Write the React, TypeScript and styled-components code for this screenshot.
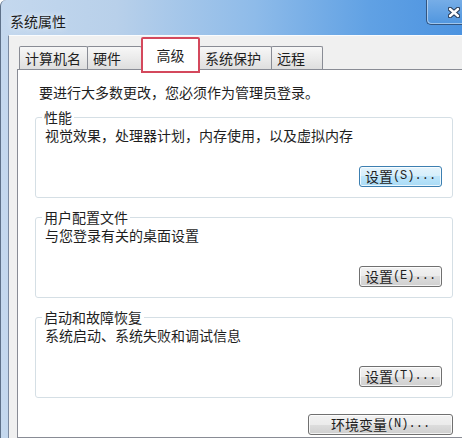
import React from "react";
import styled, { createGlobalStyle } from "styled-components";

const Global = createGlobalStyle`
  html, body { margin: 0; padding: 0; background: #fff; }
  body {
    width: 462px;
    height: 438px;
    overflow: hidden;
    font-family: "Noto Sans CJK SC", sans-serif;
  }
`;

const Frame = styled.div`
  width: 462px;
  height: 438px;
  box-sizing: border-box;
  display: flex;
  flex-direction: column;
  overflow: hidden;
  background: linear-gradient(
    to right,
    #c4d8ee 0%,
    #b8d0ea 25%,
    #8ebbe9 55%,
    #60a1e4 80%,
    #4c93e0 100%
  );
  border-left: 1px solid #5e7189;
  border-top-left-radius: 6px;
`;

const TitleBar = styled.div`
  height: 35px;
  flex-shrink: 0;
  display: flex;
  align-items: flex-start;
  justify-content: space-between;
`;

const Title = styled.div`
  margin: 13px 0 0 9px;
  font-size: 14px;
  line-height: 16px;
  color: #1b1b1b;
  text-shadow: 0 0 6px rgba(255, 255, 255, 0.9);
`;

const CloseButton = styled.div`
  width: 36px;
  height: 25px;
  box-sizing: border-box;
  display: flex;
  align-items: center;
  justify-content: flex-end;
  padding: 0 2px 0 0;
  border-left: 1px solid #33557f;
  border-bottom: 1px solid #33557f;
  border-bottom-left-radius: 5px;
  background: linear-gradient(#76ade7, #5096df);
  box-shadow: inset 1px -1px 0 rgba(255, 255, 255, 0.45);
`;

const Client = styled.div`
  flex: 1;
  display: flex;
  flex-direction: column;
  margin-left: 7px;
  border-left: 1px solid #7b8aa0;
  border-top: 1px solid #fafcfe;
  background: #f0f0f0;
  padding: 1px 0 0 8px;
  overflow: hidden;
`;

const TabStrip = styled.div`
  height: 32px;
  flex-shrink: 0;
  display: flex;
  align-items: flex-end;
  padding-left: 2px;
  position: relative;
  z-index: 1;
`;

const Tab = styled.div<{ $w: number; $active?: boolean }>`
  width: ${(p) => p.$w}px;
  box-sizing: border-box;
  height: ${(p) => (p.$active ? 36 : 23)}px;
  margin-right: -1px;
  margin-bottom: ${(p) => (p.$active ? -4 : 0)}px;
  display: flex;
  align-items: center;
  justify-content: ${(p) => (p.$active ? "center" : "flex-start")};
  padding-left: ${(p) => (p.$active ? 0 : 5)}px;
  border: ${(p) => (p.$active ? "2px solid #d4485c" : "1px solid #898c95")};
  border-bottom: ${(p) => (p.$active ? "2px solid #d4485c" : "none")};
  border-radius: 2px 2px 0 0;
  background: ${(p) =>
    p.$active ? "#fff" : "linear-gradient(#f7f7f7, #ebebeb 50%, #dedede)"};
  font-size: 14px;
  line-height: 16px;
  color: #1e1e1e;
  position: relative;
  z-index: ${(p) => (p.$active ? 2 : 1)};
`;

const Panel = styled.div`
  width: 454px;
  flex: 1;
  box-sizing: border-box;
  display: flex;
  flex-direction: column;
  background: #fff;
  border: 1px solid #898c95;
  padding: 13px 17px 0 17px;
`;

const Notice = styled.div`
  font-size: 14px;
  line-height: 18px;
  padding-left: 4px;
  color: #1e1e1e;
`;

const Group = styled.fieldset<{ $top: number }>`
  margin: ${(p) => p.$top}px 0 0 0;
  padding: 0 10px 10px 9px;
  min-width: 0;
  border: 1px solid #d5dfe5;
  border-radius: 3px;
`;

const Legend = styled.legend`
  font-size: 14px;
  line-height: 14px;
  padding: 0 2px;
  margin-left: -3px;
  color: #1e1e1e;
`;

const Desc = styled.div`
  margin-top: 3px;
  font-size: 14px;
  line-height: 16px;
  color: #1e1e1e;
`;

const ButtonRow = styled.div<{ $top: number }>`
  display: flex;
  justify-content: flex-end;
  margin-top: ${(p) => p.$top}px;
`;

const Button = styled.button<{ $w: number; $primary?: boolean }>`
  width: ${(p) => p.$w}px;
  height: 21px;
  box-sizing: border-box;
  padding: 0;
  display: inline-flex;
  align-items: center;
  justify-content: center;
  border: 1px solid ${(p) => (p.$primary ? "#3c7fb1" : "#707070")};
  border-radius: 3px;
  background: ${(p) =>
    p.$primary
      ? "linear-gradient(#e5f4fc 0%, #d4eefb 50%, #bde5fa 50%, #a9dbf6 100%)"
      : "linear-gradient(#f2f2f2 0%, #ebebeb 50%, #dddddd 50%, #cfcfcf 100%)"};
  box-shadow: inset 0 0 0 1px rgba(255, 255, 255, 0.75);
  font-family: "Noto Sans CJK SC", sans-serif;
  font-size: 14px;
  line-height: 17px;
  color: #1e1e1e;
`;

const Hotkey = styled.span`
  font-family: "Liberation Mono", monospace;
  font-size: 12px;
`;

const CloseX = () => (
  <svg width="12" height="11" viewBox="0 0 12 11">
    <path d="M2 2 L10 9 M10 2 L2 9" stroke="#2a3e5a" strokeWidth="4.6" strokeLinecap="round" />
    <path d="M2 2 L10 9 M10 2 L2 9" stroke="#ffffff" strokeWidth="2.4" strokeLinecap="round" />
  </svg>
);

const tabs = [
  { label: "计算机名", w: 69 },
  { label: "硬件", w: 55 },
  { label: "高级", w: 59, active: true },
  { label: "系统保护", w: 73 },
  { label: "远程", w: 52 },
];

const groups = [
  { title: "性能", desc: "视觉效果，处理器计划，内存使用，以及虚拟内存", key: "(S)...", primary: true, top: 9 },
  { title: "用户配置文件", desc: "与您登录有关的桌面设置", key: "(E)...", top: 12 },
  { title: "启动和故障恢复", desc: "系统启动、系统失败和调试信息", key: "(T)...", top: 12 },
];

export default function App() {
  return (
    <>
      <Global />
      <Frame>
        <TitleBar>
          <Title>系统属性</Title>
          <CloseButton>
            <CloseX />
          </CloseButton>
        </TitleBar>
        <Client>
          <TabStrip>
            {tabs.map((t) => (
              <Tab key={t.label} $w={t.w} $active={t.active}>
                {t.label}
              </Tab>
            ))}
          </TabStrip>
          <Panel>
            <Notice>要进行大多数更改，您必须作为管理员登录。</Notice>
            {groups.map((g) => (
              <Group key={g.title} $top={g.top}>
                <Legend>{g.title}</Legend>
                <Desc>{g.desc}</Desc>
                <ButtonRow $top={23}>
                  <Button $w={83} $primary={g.primary}>
                    设置<Hotkey>{g.key}</Hotkey>
                  </Button>
                </ButtonRow>
              </Group>
            ))}
            <ButtonRow $top={16}>
              <Button $w={145}>
                环境变量<Hotkey>(N)...</Hotkey>
              </Button>
            </ButtonRow>
          </Panel>
        </Client>
      </Frame>
    </>
  );
}
